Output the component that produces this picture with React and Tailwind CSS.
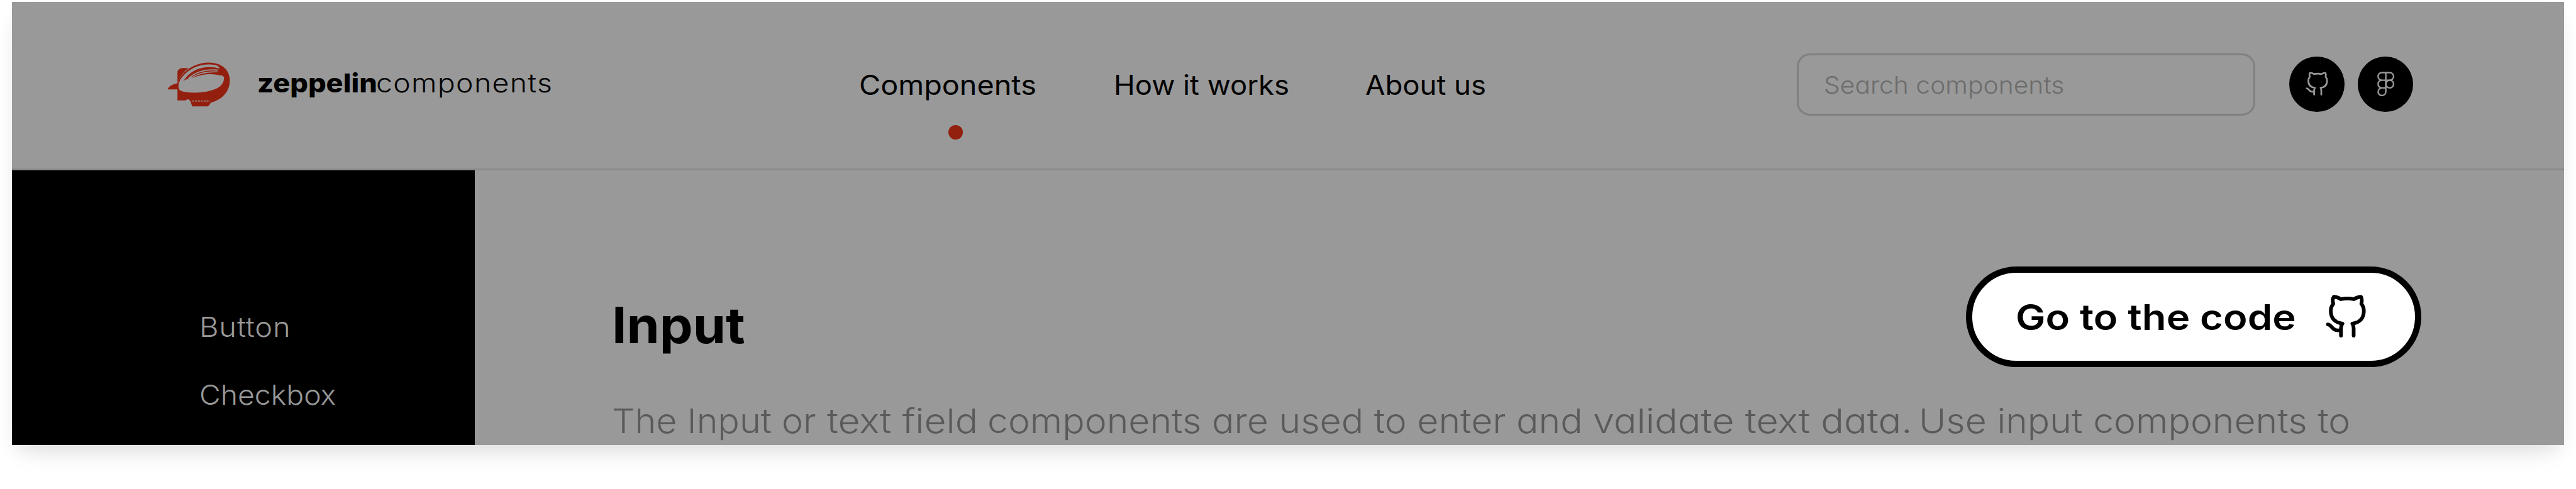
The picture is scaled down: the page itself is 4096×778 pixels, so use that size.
function GithubIcon({ className, strokeWidth }) {
  return (
    <svg viewBox="0 0 360 330" fill="none" stroke="currentColor" strokeWidth={strokeWidth} strokeLinecap="round" strokeLinejoin="round" className={className}>
      <path d="M144 282V238Q144 222 153 210C108 205 83 178 83 135C83 118 88 104 98 92C93 76 95 58 101 50C115 50 130 56 143 64C165 59 200 59 221 64C235 56 250 50 264 50C269 60 270 76 266 92C276 104 281 118 281 135C281 178 256 205 212 210Q220 222 220 238V282" />
      <path d="M66 215C88 217 90 251 124 251H142" />
    </svg>
  );
}

function FigmaIcon({ className }) {
  return (
    <svg viewBox="0 0 110 156" fill="none" stroke="currentColor" strokeWidth="9" className={className}>
      <path d="M55 9H31.500a23 23 0 0 0 0 46H78.500a23 23 0 0 0 0-46H55V124a23 23 0 1 1-23.500-23H55" />
      <path d="M31.500 55a23 23 0 0 0 0 46" />
      <circle cx="78.500" cy="78" r="23" />
    </svg>
  );
}

function ZeppelinLogo({ className }) {
  return (
    <svg viewBox="0 0 450 360" className={className}>
      <path
        fill="#931f0e"
        fillRule="evenodd"
        d="M107 162C122 106 190 46 285 43C362 42 414 84 414 150C414 216 368 266 301 282L291 298L280 305H190L178 271L165 262L148 269H102V203H43C52 183 70 175 102 166ZM108 180C112 128 190 54 285 54C325 54 352 62 352 76C355 84 350 96 352 110C360 118 374 122 380 131C380 170 355 196 305 209C250 226 165 228 125 213C112 208 107 196 108 180Z"
      />
      <path fill="#931f0e" d="M102 166V97Q108 76 135 76H168C140 97 116 126 107 162Z" />
      <path fill="#931f0e" d="M136 155C160 115 210 72 285 70C320 70 345 74 362 84V122C320 108 262 106 186 137L196 126C178 132 164 140 152 147L162 136Z" />
      <path fill="none" stroke="#999" strokeWidth="7" d="M168 138C205 103 265 82 343 88" />
      <path fill="none" stroke="#999" strokeWidth="5" d="M180 139C222 107 280 96 343 99" />
      <path fill="none" stroke="#999" strokeWidth="6" strokeDasharray="12 5" d="M190 273H294" />
    </svg>
  );
}

function Header() {
  return (
    <header className="flex h-[268px] items-start border-b-[3px] border-[#8a8a8a]">
      <ZeppelinLogo className="mt-[84.700px] ml-[236px] h-24 w-[120px] shrink-0" />
      <div className="mt-[109px] ml-[33.700px] flex w-[470px] shrink-0 text-[41px] leading-none whitespace-nowrap">
        <span className="w-[189.400px] origin-left scale-x-[1.098] font-extrabold">zeppelin</span>
        <span className="origin-left scale-x-[1.130] font-light tracking-[1.200px]">components</span>
      </div>
      <nav className="mt-[111px] ml-[487.300px] flex shrink-0 text-[43.500px] leading-none whitespace-nowrap">
        <div className="w-[405.200px]">
          <div className="origin-left scale-x-[1.075]">Components</div>
          <div className="mt-[41.500px] ml-[142px] size-[23px] rounded-full bg-[#931f0e]" />
        </div>
        <div className="w-[400px] origin-left scale-x-[1.044]">How it works</div>
        <div className="w-[201.400px] origin-left scale-x-[1.046]">About us</div>
      </nav>
      <div className="mt-[82px] ml-[484.600px] flex h-[99px] w-[728.400px] shrink-0 items-center rounded-[21px] border-[3px] border-[#7f7f7f] pt-px pl-[39.700px] text-[38.500px] leading-none font-light whitespace-nowrap text-[#6c6c6c]">
        <span className="origin-left scale-x-[1.060]">Search components</span>
      </div>
      <div className="mt-[87px] ml-[54.700px] flex shrink-0 gap-[21px] text-[#999]">
        <div className="flex size-[88px] items-center justify-center rounded-full bg-black">
          <GithubIcon strokeWidth={18} className="mb-0.5 ml-0.5 h-[50px] w-[54px]" />
        </div>
        <div className="flex size-[88px] items-center justify-center rounded-full bg-black">
          <FigmaIcon className="h-[41.500px] w-[29.200px]" />
        </div>
      </div>
    </header>
  );
}

export default function App() {
  return (
    <div className="h-[778px] w-[4096px] overflow-hidden bg-white pt-[3px] pl-[19px] font-['Inter',sans-serif] text-black [font-feature-settings:'cv11']">
      <div className="flex h-[705px] w-[4058px] flex-col overflow-hidden bg-[#999] shadow-[0_14px_28px_-8px_rgba(0,0,0,0.09),0_24px_44px_-16px_rgba(0,0,0,0.08)]">
        <Header />
        <div className="flex flex-1">
          <aside className="flex w-[736px] shrink-0 flex-col items-start gap-[65px] bg-black pt-[227.600px] pl-[298px] text-[43.500px] leading-none font-light text-[#999]">
            <div className="origin-left scale-x-[1.080] tracking-[0.800px]">Button</div>
            <div className="origin-left scale-x-[1.065]">Checkbox</div>
          </aside>
          <main className="flex-1 pt-[153px] pl-[218.200px]">
            <div className="flex items-start">
              <h1 className="mt-[54px] w-[2153.100px] shrink-0 origin-left scale-x-[1.056] text-[79.500px] leading-none font-bold">Input</h1>
              <button className="flex h-40 w-[724px] shrink-0 items-center rounded-full border-[10px] border-black bg-white pl-[68.600px]">
                <span className="w-[479.600px] shrink-0 origin-left scale-x-[1.112] text-left text-[57px] leading-none font-semibold whitespace-nowrap">Go to the code</span>
                <GithubIcon strokeWidth={22} className="mb-[3px] h-[87.700px] w-[95.700px] shrink-0" />
              </button>
            </div>
            <p className="mt-[58.500px] flex text-[53.800px] leading-none font-light whitespace-nowrap text-[#5a5a5a]">
              <span className="w-[341.900px] shrink-0 origin-left scale-x-[1.066]">The Input or </span>
              <span className="w-[255.200px] shrink-0 origin-left scale-x-[1.125]">text field </span>
              <span className="w-[962.300px] shrink-0 origin-left scale-x-[1.095]">components are used to enter and </span>
              <span className="w-[518.500px] shrink-0 origin-left scale-x-[1.135]">validate text data. </span>
              <span className="shrink-0 origin-left scale-x-[1.095]">Use input components to</span>
            </p>
          </main>
        </div>
      </div>
    </div>
  );
}
